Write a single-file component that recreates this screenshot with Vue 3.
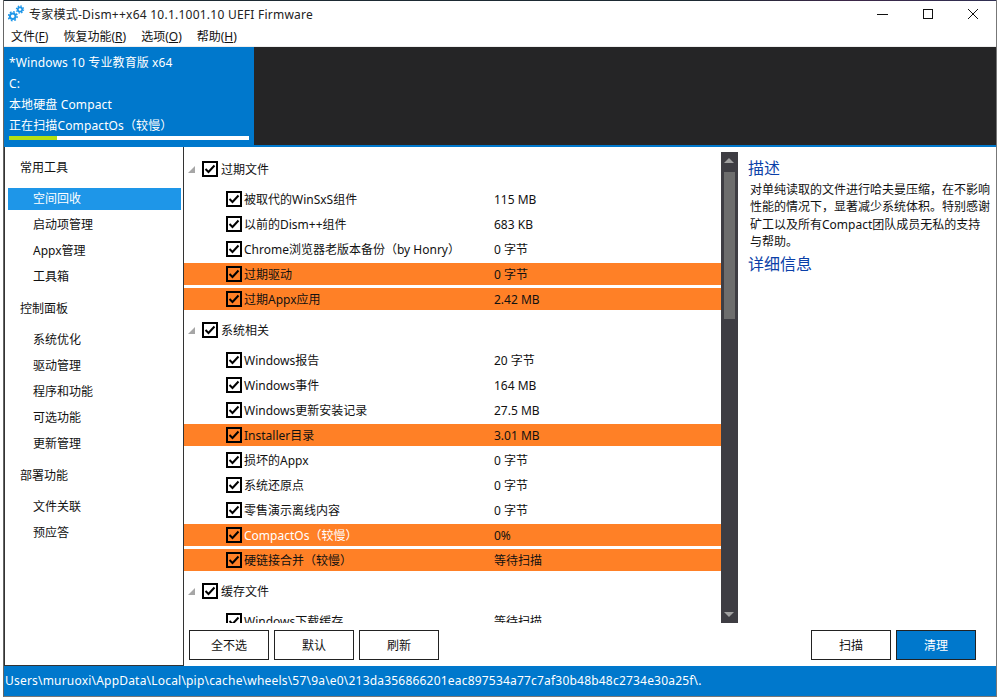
<template>
  <div class="desktop">
    <div class="window">
      <div class="topline"></div>
      <div class="titlebar">
        <svg class="app-icon" width="18" height="20" viewBox="0 0 18 20">
          <g fill="none" stroke="#1e96e8">
            <circle cx="4.7" cy="12.2" r="2.8" stroke-width="2" />
            <circle cx="4.7" cy="12.2" r="4.4" stroke-width="1.6" stroke-dasharray="1.7 1.75" />
            <circle cx="12" cy="5.5" r="2.2" stroke-width="1.7" />
            <circle cx="12" cy="5.5" r="3.5" stroke-width="1.4" stroke-dasharray="1.4 1.35" />
          </g>
        </svg>
        <span class="title">专家模式-Dism++x64 10.1.1001.10 UEFI Firmware</span>
        <div class="win-btns">
          <svg width="12" height="12" viewBox="0 0 12 12"><path d="M0 6.5h11" stroke="#111" fill="none" /></svg>
          <svg width="12" height="12" viewBox="0 0 12 12"><rect x="1.5" y="1.5" width="9" height="9" stroke="#111" fill="none" /></svg>
          <svg width="12" height="12" viewBox="0 0 12 12"><path d="M1 1l10 10M11 1L1 11" stroke="#111" fill="none" /></svg>
        </div>
      </div>

      <div class="menubar">
        <span v-for="m in menus" :key="m.key">{{ m.label }}(<u>{{ m.key }}</u>)</span>
      </div>

      <div class="header">
        <div class="image-card">
          <div>*Windows 10 专业教育版 x64</div>
          <div>C:</div>
          <div>本地硬盘 Compact</div>
          <div>正在扫描CompactOs（较慢）</div>
          <div class="progress"><div class="progress-fill" :style="{ width: progress + '%' }"></div></div>
        </div>
      </div>

      <div class="main">
        <div class="sidebar">
          <div v-for="g in nav" :key="g.title" class="nav-group">
            <div class="nav-title">{{ g.title }}</div>
            <div
              v-for="item in g.items"
              :key="item"
              class="nav-item"
              :class="{ active: item === '空间回收' }"
            >{{ item }}</div>
          </div>
        </div>

        <div class="content">
          <div class="content-top">
            <div class="tree">
              <div v-for="g in groups" :key="g.title" class="tree-group">
                <div class="group-head">
                  <span class="arrow"></span>
                  <span class="check big">
                    <svg width="12" height="10" viewBox="0 0 12 10"><path d="M1.5 5l3 3 6-6.5" fill="none" stroke="#000" stroke-width="2" /></svg>
                  </span>
                  <span>{{ g.title }}</span>
                </div>
                <div v-for="row in g.rows" :key="row.name" class="row" :class="{ hot: row.hot }">
                  <span class="check">
                    <svg width="12" height="10" viewBox="0 0 12 10"><path d="M1.5 5l3 3 6-6.5" fill="none" stroke="#000" stroke-width="2" /></svg>
                  </span>
                  <span class="row-name" :class="{ light: row.light }">{{ row.name }}</span>
                  <span class="row-size">{{ row.size }}</span>
                </div>
              </div>
            </div>

            <div class="scrollbar">
              <span class="sb-up"></span>
              <div class="sb-thumb"></div>
              <span class="sb-down"></span>
            </div>

            <div class="desc">
              <div class="desc-title">描述</div>
              <div class="desc-text">对单纯读取的文件进行哈夫曼压缩，在不影响性能的情况下，显著减少系统体积。特别感谢矿工以及所有Compact团队成员无私的支持与帮助。</div>
              <div class="desc-title">详细信息</div>
            </div>
          </div>

          <div class="actions">
            <button class="btn">全不选</button>
            <button class="btn">默认</button>
            <button class="btn">刷新</button>
            <div class="spacer"></div>
            <button class="btn">扫描</button>
            <button class="btn primary">清理</button>
          </div>
        </div>
      </div>

      <div class="statusbar">{{ statusPath }}</div>
    </div>
  </div>
</template>

<script setup>
const progress = 20

const menus = [
  { label: '文件', key: 'F' },
  { label: '恢复功能', key: 'R' },
  { label: '选项', key: 'O' },
  { label: '帮助', key: 'H' },
]

const nav = [
  { title: '常用工具', items: ['空间回收', '启动项管理', 'Appx管理', '工具箱'] },
  { title: '控制面板', items: ['系统优化', '驱动管理', '程序和功能', '可选功能', '更新管理'] },
  { title: '部署功能', items: ['文件关联', '预应答'] },
]

const groups = [
  {
    title: '过期文件',
    rows: [
      { name: '被取代的WinSxS组件', size: '115 MB' },
      { name: '以前的Dism++组件', size: '683 KB' },
      { name: 'Chrome浏览器老版本备份（by Honry）', size: '0 字节' },
      { name: '过期驱动', size: '0 字节', hot: true },
      { name: '过期Appx应用', size: '2.42 MB', hot: true },
    ],
  },
  {
    title: '系统相关',
    rows: [
      { name: 'Windows报告', size: '20 字节' },
      { name: 'Windows事件', size: '164 MB' },
      { name: 'Windows更新安装记录', size: '27.5 MB' },
      { name: 'Installer目录', size: '3.01 MB', hot: true },
      { name: '损坏的Appx', size: '0 字节' },
      { name: '系统还原点', size: '0 字节' },
      { name: '零售演示离线内容', size: '0 字节' },
      { name: 'CompactOs（较慢）', size: '0%', hot: true, light: true },
      { name: '硬链接合并（较慢）', size: '等待扫描', hot: true },
    ],
  },
  {
    title: '缓存文件',
    rows: [{ name: 'Windows下载缓存', size: '等待扫描' }],
  },
]

const statusPath = 'Users\\muruoxi\\AppData\\Local\\pip\\cache\\wheels\\57\\9a\\e0\\213da356866201eac897534a77c7af30b48b48c2734e30a25f\\.'
</script>

<style>
html, body {
  margin: 0;
  background: #fff;
}
</style>

<style scoped>
.desktop {
  width: 1000px;
  height: 700px;
  overflow: hidden;
  background: #fff;
  font-family: "Noto Sans", "Noto Sans CJK SC", sans-serif;
  font-size: 12px;
  color: #111;
}

.window {
  width: 992px;
  height: 696px;
  margin-left: 3px;
  border-left: 1px solid #666;
  border-right: 1px solid #777;
  border-bottom: 1px solid #777;
  background: #fff;
  display: flex;
  flex-direction: column;
}

.topline {
  height: 1px;
  background: linear-gradient(90deg, #1d2a33 70%, #3c2748 85%, #2f2f52);
  flex: none;
}

.titlebar {
  height: 29px;
  display: flex;
  align-items: center;
  padding-left: 4px;
  padding-bottom: 3px;
  box-sizing: border-box;
  flex: none;
}

.title {
  margin-left: 3px;
  color: #222;
  letter-spacing: 0.24px;
}

.win-btns {
  margin-left: auto;
  display: flex;
  gap: 33px;
  padding-right: 17px;
}

.menubar {
  height: 16px;
  padding-left: 7px;
  display: flex;
  gap: 15px;
  line-height: 13px;
  flex: none;
}

.header {
  height: 98px;
  border-top: 1px solid #eee;
  border-bottom: 2px solid #0078cc;
  background: #252526;
  flex: none;
}

.image-card {
  width: 250px;
  height: 98px;
  box-sizing: border-box;
  background: #0078cc;
  color: #fff;
  padding: 5px 5px 0;
  line-height: 21px;
  letter-spacing: 0.12px;
}

.progress {
  width: 240px;
  height: 4px;
  background: #fff;
}

.progress-fill {
  height: 100%;
  background: #b4e014;
}

.main {
  flex: 1;
  display: flex;
  min-height: 0;
}

.sidebar {
  width: 180px;
  box-sizing: border-box;
  border-left: 1px solid #333;
  border-right: 1px solid #333;
  border-bottom: 1px solid #333;
  padding: 10px 2px 0 3px;
  flex: none;
}

.nav-group {
  margin-bottom: 10px;
}

.nav-title {
  height: 22px;
  line-height: 22px;
  padding-left: 12px;
  margin-bottom: 9px;
}

.nav-item {
  height: 22px;
  line-height: 22px;
  margin-bottom: 4px;
  padding-left: 25px;
}

.nav-item.active {
  background: #1e96e8;
  color: #fff;
}

.content {
  flex: 1;
  display: flex;
  flex-direction: column;
  min-width: 0;
}

.content-top {
  flex: 1;
  display: flex;
  min-height: 0;
  padding-top: 5px;
}

.tree {
  width: 537px;
  height: 471px;
  overflow: hidden;
  flex: none;
}

.group-head {
  height: 24px;
  display: flex;
  align-items: center;
  padding-left: 4px;
  margin-top: 8px;
  margin-bottom: 7px;
}

.tree-group:first-child .group-head {
  margin-top: 5px;
}

.arrow {
  width: 0;
  height: 0;
  border-left: 7px solid transparent;
  border-bottom: 7px solid #a6a6a6;
  margin-right: 7px;
}

.check {
  width: 12px;
  height: 12px;
  border: 2px solid #000;
  background: #fff;
  display: inline-flex;
  align-items: center;
  justify-content: center;
  flex: none;
  margin-right: 2px;
}

.check.big {
  margin-right: 3px;
}

.row {
  height: 22px;
  margin-bottom: 3px;
  padding-left: 42px;
  display: flex;
  align-items: center;
}

.row.hot {
  background: #ff8026;
}

.row.hot .check {
  background: transparent;
}

.row-name {
  width: 250px;
  flex: none;
}

.row-name.light {
  color: #fff;
}

.scrollbar {
  width: 17px;
  height: 471px;
  background: #3e3d43;
  position: relative;
  flex: none;
}

.sb-up,
.sb-down {
  position: absolute;
  left: 3px;
  width: 0;
  height: 0;
  border-left: 5px solid transparent;
  border-right: 5px solid transparent;
}

.sb-up {
  top: 6px;
  border-bottom: 5px solid #a0a0a0;
}

.sb-down {
  bottom: 6px;
  border-top: 5px solid #a0a0a0;
}

.sb-thumb {
  position: absolute;
  left: 3px;
  top: 20px;
  width: 11px;
  height: 147px;
  background: #6d6d6d;
}

.desc {
  flex: 1;
  padding: 4px 5px 0 10px;
  color: #111;
  line-height: 17.33px;
}

.desc-title {
  font-size: 16px;
  color: #0b3fa8;
  line-height: 24px;
}

.desc-text {
  padding-left: 2px;
  margin: 1px 0 2px;
}

.actions {
  height: 42px;
  display: flex;
  gap: 5px;
  padding: 6px 20px 0 5px;
  box-sizing: border-box;
  flex: none;
}

.btn {
  width: 80px;
  height: 30px;
  border: 1px solid #222;
  background: #fff;
  font: inherit;
  color: #111;
  padding: 0;
}

.btn.primary {
  background: #0078cc;
  color: #fff;
}

.spacer {
  flex: 1;
}

.statusbar {
  height: 30px;
  background: #0078cc;
  color: #fff;
  line-height: 30px;
  white-space: nowrap;
  overflow: hidden;
  padding-left: 1px;
  letter-spacing: 0.2px;
  flex: none;
}
</style>
